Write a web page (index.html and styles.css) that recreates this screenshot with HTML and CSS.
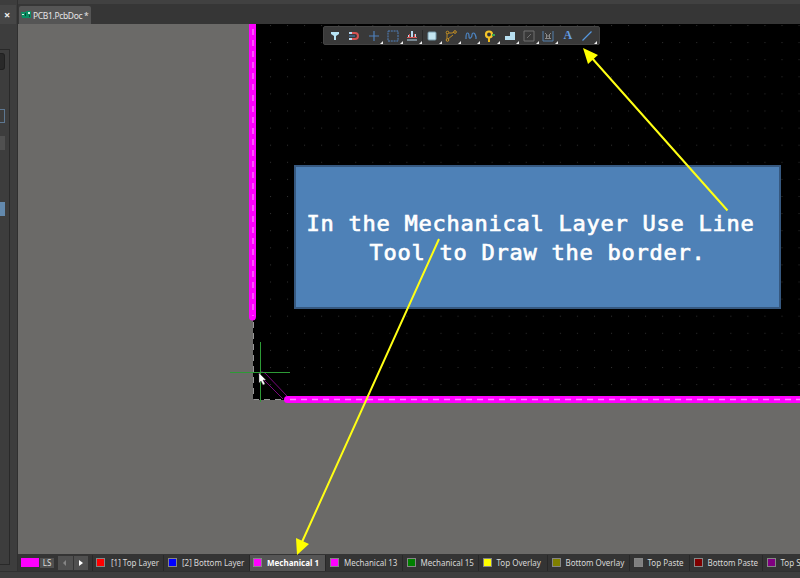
FILE: index.html
```
<!DOCTYPE html>
<html lang="en">
<head>
<meta charset="utf-8">
<title>PCB1.PcbDoc</title>
<link rel="stylesheet" href="styles.css">
</head>
<body>
<div class="app">
  <aside class="side">
    <div class="side-head">×</div>
    <div class="side-body">
      <div class="side-panel">
        <i class="field dark"></i><i class="field outline"></i><i class="field gray"></i><i class="field blue"></i>
      </div>
    </div>
  </aside>
  <main class="main">
    <header class="doc-tabs">
      <div class="doc-tab">
        <svg width="10" height="8" viewBox="0 0 10 8"><path fill="#0b8f63" d="M0 1h5v6H1zM5 0h5v7H5z"/><path fill="#d5f5e6" d="M7 1h2v2H7zM1 3h2v1H1z"/><path fill="#064d38" d="M4 2h1v3H4zM8 4h1v2H8z"/></svg>
        <span>PCB1.PcbDoc *</span>
      </div>
    </header>
    <section class="canvas">
      <svg class="board" width="782" height="530" viewBox="18 24 782 530">
        <defs><pattern id="grid" x="270" y="25" width="17.05" height="17.1" patternUnits="userSpaceOnUse"><rect width="1" height="1" fill="#303030"/></pattern></defs>
        <path fill="#000" d="M253 24H800V400H253z"/>
        <path fill="url(#grid)" d="M262 24H800V394H262z"/>
        <path fill="none" stroke="#969696" stroke-dasharray="6 5" d="M253.500 322V399.500H286"/>
        <path fill="none" stroke="#f0f" stroke-width="7" d="M252.500 20V317M288 399.500H800"/>
        <circle cx="252.500" cy="317" r="3.500" fill="#f0f"/><circle cx="287.500" cy="399.500" r="3.500" fill="#f0f"/>
        <path fill="none" stroke="#ff82ff" stroke-width="1.300" stroke-dasharray="6 5" d="M253 29V316M290 399.500H800"/>
        <path fill="none" stroke="#7a087c" d="M259 375l24 24M265 373l22 23M259 375q0-5 6-2"/>
        <path fill="none" stroke="#2d9a36" d="M230 372.500H290M260.500 342V402"/>
        <path fill="#fff" stroke="#333" stroke-width=".4" d="M259 373v10l2-2 2 4 2-1-2-4h3z"/>
      </svg>
      <div class="toolbar">
        <div class="tool"><svg viewBox="0 0 14 14"><path fill="#b8e4f5" d="M3 3h8v2L8 7v4H6V7L3 5z"/></svg></div>
        <div class="tool"><svg viewBox="0 0 14 14"><path fill="none" stroke="#d65353" stroke-width="2" d="M5 4h3q3 0 3 3t-3 3H5"/><path stroke="#b9d8ef" stroke-width="2" d="M2 4h3M2 10h3"/><path stroke="#4a83c4" d="M2 7h6"/></svg></div>
        <div class="tool more"><svg viewBox="0 0 14 14"><path stroke="#4f80bb" stroke-width="1.200" d="M2 7h10M7 2v10"/></svg></div>
        <div class="tool more"><svg viewBox="0 0 14 14"><rect x="2" y="2" width="10" height="10" fill="none" stroke="#5283c0" stroke-dasharray="2 .8"/></svg></div>
        <div class="tool more"><svg viewBox="0 0 14 14"><path fill="#b7d9ef" d="M3 6h2v3H3zM6 2h2v7H6zM9 5h2v4H9z"/><path stroke="#d65353" d="M2 8.500h10M4.500 5v3M9.500 5v3"/><path stroke="#b7d9ef" d="M2 11h10"/></svg></div>
        <div class="tool more sep"><svg viewBox="0 0 14 14"><rect x="3" y="3" width="8" height="8" rx="1" fill="#c5e5f0" stroke="#789bac"/></svg></div>
        <div class="tool more"><svg viewBox="0 0 14 14"><path fill="none" stroke="#bd8b25" d="M3 10V4h5l3-1M4 10l5-4"/><g fill="#303030" stroke="#c89226"><circle cx="3.500" cy="3.500" r="1.300"/><circle cx="11" cy="3" r="1.300"/><circle cx="3.500" cy="11" r="1.300"/></g></svg></div>
        <div class="tool more"><svg viewBox="0 0 14 14"><path fill="none" stroke="#4d86c5" stroke-width="1.200" d="M2 10V9q0-5 1.500-5T5 7t1.500 2T8 6t1.500-2T12 8v2"/></svg></div>
        <div class="tool more"><svg viewBox="0 0 14 14"><path stroke="#f5bd18" stroke-width="2" d="M6 7v6"/><circle cx="6" cy="5.500" r="3" fill="#353535" stroke="#f5c52a" stroke-width="2.200"/><path stroke="#39a658" stroke-width="2" d="M9 6h3"/></svg></div>
        <div class="tool more"><svg viewBox="0 0 14 14"><path fill="#b7dff0" d="M7 3h5v8H2V7h5z"/></svg></div>
        <div class="tool more"><svg viewBox="0 0 14 14"><path fill="none" stroke="#707070" d="M2 2h10v10H2zM5 9l4-4"/></svg></div>
        <div class="tool more"><svg viewBox="0 0 14 14"><path fill="none" stroke="#5580ad" d="M2 2v10h10V2"/><path fill="none" stroke="#8a8a8a" d="M5.500 9V5M8.500 9V5M4 9.500h6M4 4.500h1M9 4.500h1M6 7h2"/></svg></div>
        <div class="tool letter">A</div>
        <div class="tool more"><svg viewBox="0 0 14 14"><path stroke="#5697de" stroke-width="1.300" d="M2.500 11.500l9-9"/></svg></div>
      </div>
      <div class="note">In the Mechanical Layer Use Line&nbsp;<br>Tool to Draw the border.</div>
    </section>
    <nav class="layers">
      <i class="current"></i><span class="ls">LS</span>
      <div class="arrows"><svg width="30" height="14" viewBox="0 0 30 14"><path fill="#858585" d="M8 4v6L5 7z"/><path fill="#fff" d="M21 4v6l4-3z"/><path stroke="#353535" d="M15.500 0v14"/></svg></div>
      <div class="tabs">
        <div class="layer first"><i class="red"></i><span>[1] Top Layer</span></div>
        <div class="layer"><i class="navy"></i><span>[2] Bottom Layer</span></div>
        <div class="layer active"><i class="pink"></i><span>Mechanical 1</span></div>
        <div class="layer"><i class="pink"></i><span>Mechanical 13</span></div>
        <div class="layer"><i class="green"></i><span>Mechanical 15</span></div>
        <div class="layer"><i class="yellow"></i><span>Top Overlay</span></div>
        <div class="layer"><i class="olive"></i><span>Bottom Overlay</span></div>
        <div class="layer"><i class="silver"></i><span>Top Paste</span></div>
        <div class="layer"><i class="maroon"></i><span>Bottom Paste</span></div>
        <div class="layer"><i class="purple"></i><span>Top S</span></div>
      </div>
    </nav>
  </main>
  <footer class="status"></footer>
  <svg class="pointers" width="800" height="578" viewBox="0 0 800 578">
    <path fill="none" stroke="#ffff14" stroke-width="2" d="M727.500 210.500L591 57M439 239L302 542"/>
    <path fill="#ff0" d="M583 48l15 7-10 9zM297 555l-1-17 13 6z"/>
  </svg>
</div>
</body>
</html>
```
FILE: styles.css
```
* { box-sizing: border-box; }
body { margin: 0; background: #343434; font-family: "Noto Sans", "Open Sans", sans-serif; }
.app { position: relative; width: 800px; height: 578px; overflow: hidden; display: grid; grid-template: 571px 7px / 18px 782px; }
svg { display: block; flex: none; }

.side { background: #3d3d3d; border-right: 1px solid #303030; padding-top: 5px; }
.side-head { height: 19px; background: #464646; color: #f2f2f2; font: bold 11px/19px "Open Sans", sans-serif; padding-left: 4px; width: 16px; }
.side-body { padding-top: 25px; }
.side-panel { width: 10px; height: 516px; border: 1px solid #292929; border-left: 0; padding-top: 3px; }
.field { display: block; width: 5px; height: 14px; }
.dark { height: 17px; background: #292929; border: 1px solid #202020; border-left: 0; border-radius: 0 3px 3px 0; }
.outline { margin-top: 39px; border: 1px solid #5d7791; border-left: 0; }
.gray { margin-top: 13px; background: #505050; }
.blue { margin-top: 52px; background: #6389ad; }

.main { display: grid; grid-template-rows: 24px 530px 17px; min-width: 0; }
.doc-tabs { background: #363636; border-top: 4px solid #414141; padding: 2px 0 0 1px; }
.doc-tab { width: 72px; height: 18px; background: #555; border-radius: 2px 2px 0 0; display: flex; align-items: center; gap: 2px; padding-left: 2px; color: #e6e6e6; font-size: 8.500px; letter-spacing: -.35px; white-space: nowrap; }
.canvas { position: relative; background: #6b6a68; overflow: hidden; }
.toolbar { position: absolute; left: 305px; top: 2px; width: 277px; height: 19px; background: #393939; border: 1px solid #444; border-radius: 2px; display: grid; grid-template-columns: repeat(14, 19.430px); padding-left: 1px; }
.tool { position: relative; height: 17px; display: flex; align-items: center; justify-content: center; }
.tool svg { width: 14px; height: 14px; }
.more::after { content: ""; position: absolute; right: 0; bottom: 0; border-left: 3px solid transparent; border-bottom: 3px solid #eee; }
.sep::before { content: ""; position: absolute; left: 0; top: 3px; height: 12px; border-left: 1px solid #292929; }
.letter { color: #659de2; font: bold 12px "Liberation Serif", serif; }
.note { position: absolute; left: 276px; top: 141px; width: 487px; height: 144px; background: #4e81b7; border: 2px solid #36587f; color: #fff; font: 22px/29px "DejaVu Sans Mono", monospace; letter-spacing: .755px; text-align: center; padding-top: 42px; white-space: nowrap; -webkit-text-stroke: .7px #fff; }

.layers { display: flex; padding: 1px 0 0 3px; background: #343434; overflow: hidden; }
.current { width: 18px; height: 9px; margin-top: 3px; background: #f0f; flex: none; }
.ls { width: 14px; height: 10px; margin: 3px 4px 0 1px; background: #505050; color: #ddd; font-size: 8px; line-height: 10px; text-align: center; flex: none; }
.arrows { width: 30px; height: 14px; background: #505050; margin: 1px 4px 0 0; flex: none; }
.tabs { display: grid; grid-template-columns: 71px 86px 76px 76.500px 76px 69px 82px 60px 73px 80px; }
.layer { display: flex; padding-left: 4px; border-left: 1px solid #282828; height: 16px; color: #d8d8d8; font-size: 8px; line-height: 15px; letter-spacing: -.02px; white-space: nowrap; }
.layer i { width: 9px; height: 9px; margin: 3px 5px 0 0; outline: 1px solid #858585; outline-offset: -1px; flex: none; }
.first { padding-left: 3px; }
.first i { margin-right: 6px; }
.active { background: #555; color: #fff; font-weight: bold; letter-spacing: 0; padding-left: 3px; }
.red { background: #f00; } .navy { background: #00f; } .pink { background: #f0f; } .green { background: #008000; }
.yellow { background: #ff0; } .olive { background: #808000; } .silver { background: #808080; } .maroon { background: #800000; } .purple { background: #800080; }
.status { grid-column: 1 / 3; background: #3e3e3e; border-top: 1px solid #303030; }
.pointers { position: absolute; left: 0; top: 0; pointer-events: none; }
```
